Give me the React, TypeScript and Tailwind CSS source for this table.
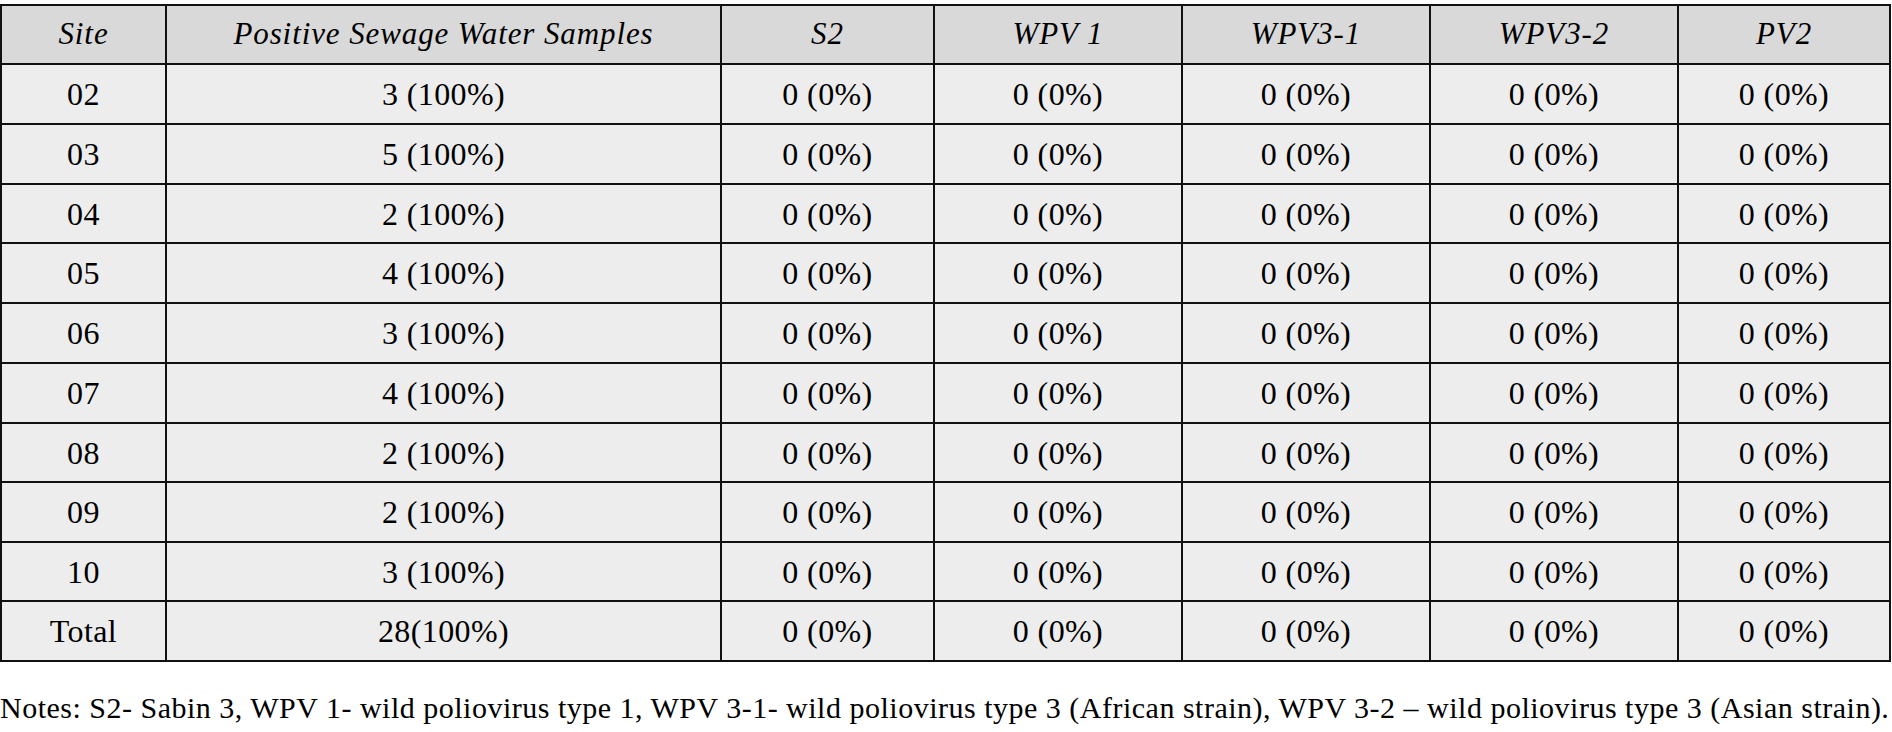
const HEADERS = ['Site', 'Positive Sewage Water Samples', 'S2', 'WPV 1', 'WPV3-1', 'WPV3-2', 'PV2']

const ROWS = [
  ['02', '3 (100%)'],
  ['03', '5 (100%)'],
  ['04', '2 (100%)'],
  ['05', '4 (100%)'],
  ['06', '3 (100%)'],
  ['07', '4 (100%)'],
  ['08', '2 (100%)'],
  ['09', '2 (100%)'],
  ['10', '3 (100%)'],
  ['Total', '28(100%)'],
]

export default function App() {
  return (
    <div className="w-[1892px] h-[732px] bg-white text-black font-['Liberation_Serif',serif]">
      {/* Table: black gap shows through as the cell rules */}
      <div className="mt-[4px] w-[1891px] grid grid-cols-[163px_553px_211px_246px_246px_246px_210px] grid-rows-[57px_58px_58px_57px_58px_58px_58px_57px_58px_57px_58px] gap-[2px] p-[2px] bg-[#111]">
        {HEADERS.map((h) => (
          <div
            key={h}
            className="bg-[#d9d9d9] flex items-center justify-center italic text-[31px] tracking-[0.9px]"
          >
            {h}
          </div>
        ))}
        {ROWS.map(([site, pos]) => (
          <>
            <div key={site} className="bg-[#ededed] flex items-center justify-center text-[32px] tracking-[0.4px]">
              {site}
            </div>
            <div className="bg-[#ededed] flex items-center justify-center text-[32px] tracking-[0.4px]">{pos}</div>
            {[0, 1, 2, 3, 4].map((i) => (
              <div key={i} className="bg-[#ededed] flex items-center justify-center text-[32px] tracking-[0.4px]">
                0 (0%)
              </div>
            ))}
          </>
        ))}
      </div>

      {/* Notes */}
      <p className="mt-[29px] text-[30px] leading-[34px] tracking-[0.5px] whitespace-nowrap">
        Notes: S2- Sabin 3, WPV 1- wild poliovirus type 1, WPV 3-1- wild poliovirus type 3 (African strain), WPV 3-2 – wild poliovirus type 3 (Asian strain).
      </p>
    </div>
  )
}
